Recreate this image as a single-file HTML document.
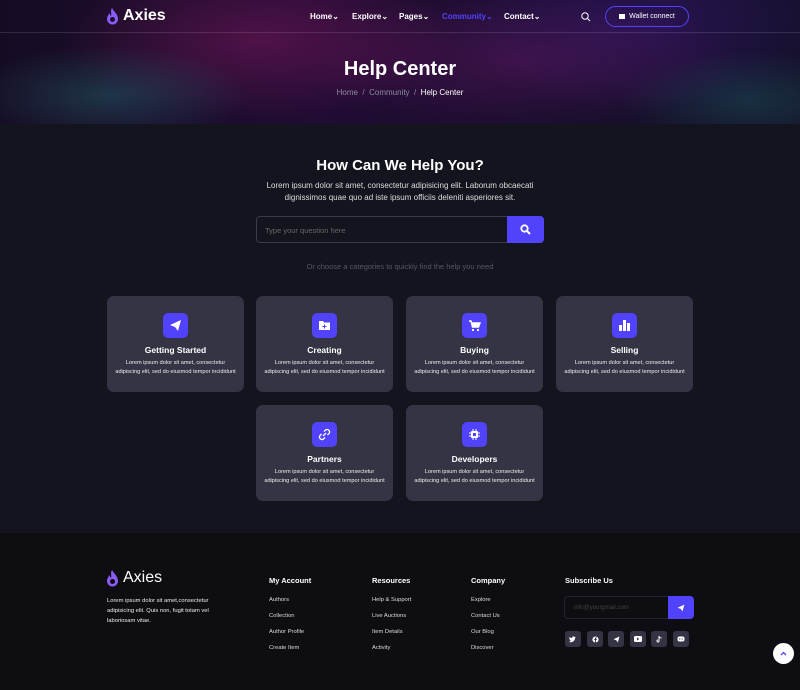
<!DOCTYPE html>
<html><head><meta charset="utf-8"><style>
*{margin:0;padding:0;box-sizing:border-box}
body{width:800px;height:690px;overflow:hidden;background:#14141f;font-family:"Liberation Sans",sans-serif;color:#fff;position:relative}
.hero{position:absolute;left:0;top:0;width:800px;height:124px;background:
radial-gradient(ellipse 140px 50px at 110px 95px,rgba(40,130,130,.35),transparent),
radial-gradient(ellipse 200px 80px at 260px 40px,rgba(140,25,100,.45),transparent),
radial-gradient(ellipse 220px 70px at 520px 60px,rgba(110,25,110,.4),transparent),
radial-gradient(ellipse 130px 50px at 750px 100px,rgba(30,120,120,.3),transparent),
radial-gradient(ellipse 200px 90px at 640px 20px,rgba(60,25,130,.45),transparent),
linear-gradient(90deg,#150c24,#210c33 40%,#180e2c 70%,#15102a);}
.nav{position:absolute;top:0;left:0;width:800px;height:33px;border-bottom:1px solid rgba(255,255,255,.12)}
.logo{position:absolute;display:flex;align-items:center;gap:4px;font-size:16px;font-weight:bold}
.menu{position:absolute;top:12px;font-size:8px;font-weight:bold}
.wallet{position:absolute;left:605px;top:6px;width:84px;height:21px;border:1.5px solid #5142fc;border-radius:11px;font-size:7px;display:flex;align-items:center;justify-content:center;gap:4px}
h1{position:absolute;top:58px;width:800px;text-align:center;font-size:20px}
.crumb{position:absolute;top:88px;width:800px;text-align:center;font-size:8px;color:#8a8aa0}
h2{position:absolute;top:157px;width:800px;text-align:center;font-size:15px}
.intro{position:absolute;top:180px;width:800px;text-align:center;font-size:8px;line-height:12px;color:#ddd}
.search{position:absolute;left:256px;top:216px;width:288px;height:27px;border:1px solid #3a3a4c;border-radius:4px;font-size:7.5px;color:#666;padding:9px 8px}
.sbtn{position:absolute;left:507px;top:216px;width:37px;height:27px;background:#5142fc;border-radius:0 4px 4px 0;display:flex;align-items:center;justify-content:center}
.or{position:absolute;top:262px;width:800px;text-align:center;font-size:7.5px;color:#55556a}
.card{position:absolute;width:137px;height:96px;background:#343444;border-radius:7px;text-align:center}
.ic{width:25px;height:25px;background:#5142fc;border-radius:5px;margin:17px auto 0;display:flex;align-items:center;justify-content:center}
.card h3{font-size:8.5px;margin-top:7px}
.card p{font-size:5.6px;line-height:9px;margin-top:4px;color:#eee}
.footer{position:absolute;left:0;top:533px;width:800px;height:157px;background:#0d0d12}
.fh{position:absolute;top:576px;font-size:7.5px;font-weight:bold}
.fl{position:absolute;font-size:5.8px;color:#ddd;line-height:16px}
.soc{position:absolute;top:631px;width:16px;height:16px;background:#343444;border-radius:3px;display:flex;align-items:center;justify-content:center}
</style></head><body>
<div class="hero"></div>
<div class="nav"></div>
<div class="logo" style="left:106px;top:7px"><svg width="13" height="18" viewBox="0 0 13 18"><path d="M6 1C8 5 12 7 12 12a5.5 5.5 0 0 1-11 0c0-3 2-4 2-6 1 1 1 2 2 3C6 7 4 4 6 1z" fill="#8a5cf6"/><circle cx="6.5" cy="12.5" r="2.5" fill="#1a0f2e"/></svg>Axies</div>
<div class="menu" style="left:310px">Home&#8964;</div>
<div class="menu" style="left:352px">Explore&#8964;</div>
<div class="menu" style="left:399px">Pages&#8964;</div>
<div class="menu" style="left:442px;color:#5142fc">Community&#8964;</div>
<div class="menu" style="left:504px">Contact&#8964;</div>
<svg style="position:absolute;left:581px;top:12px" width="10" height="10" viewBox="0 0 10 10"><circle cx="4" cy="4" r="3.2" stroke="#fff" fill="none"/><path d="M6.5 6.5L9 9" stroke="#fff"/></svg>
<div class="wallet"><span style="display:inline-block;width:6px;height:5px;background:#fff"></span>Wallet connect</div>
<h1>Help Center</h1>
<div class="crumb">Home &nbsp;/&nbsp; Community &nbsp;/&nbsp; <span style="color:#fff">Help Center</span></div>
<h2>How Can We Help You?</h2>
<div class="intro">Lorem ipsum dolor sit amet, consectetur adipisicing elit. Laborum obcaecati<br>dignissimos quae quo ad iste ipsum officiis deleniti asperiores sit.</div>
<div class="search">Type your question here</div>
<div class="sbtn"><svg width="11" height="11" viewBox="0 0 11 11"><circle cx="4.5" cy="4.5" r="3.2" stroke="#fff" stroke-width="1.8" fill="none"/><path d="M7 7L10 10" stroke="#fff" stroke-width="2"/></svg></div>
<div class="or">Or choose a categories to quickly find the help you need</div>

<div class="card" style="left:107px;top:296px"><div class="ic"><svg width="13" height="13" viewBox="0 0 13 13"><path d="M1 6L12 1 9 12 6 8z" fill="#fff"/></svg></div><h3>Getting Started</h3><p>Lorem ipsum dolor sit amet, consectetur<br>adipiscing elit, sed do eiusmod tempor incididunt</p></div>
<div class="card" style="left:256px;top:296px"><div class="ic"><svg width="13" height="11" viewBox="0 0 13 11"><path d="M1 1h4l1 1.5h6V10H1z" fill="#fff"/><path d="M6.5 4.5v4M4.5 6.5h4" stroke="#5142fc"/></svg></div><h3>Creating</h3><p>Lorem ipsum dolor sit amet, consectetur<br>adipiscing elit, sed do eiusmod tempor incididunt</p></div>
<div class="card" style="left:406px;top:296px"><div class="ic"><svg width="13" height="13" viewBox="0 0 13 13"><path d="M1 2h2l1.5 6h6L12 4H4" stroke="#fff" stroke-width="1.4" fill="#fff"/><circle cx="5" cy="11" r="1.1" fill="#fff"/><circle cx="10" cy="11" r="1.1" fill="#fff"/></svg></div><h3>Buying</h3><p>Lorem ipsum dolor sit amet, consectetur<br>adipiscing elit, sed do eiusmod tempor incididunt</p></div>
<div class="card" style="left:556px;top:296px"><div class="ic"><svg width="13" height="13" viewBox="0 0 13 13"><rect x="1" y="6" width="3" height="6" fill="#fff"/><rect x="5" y="1" width="3" height="11" fill="#fff"/><rect x="9" y="4" width="3" height="8" fill="#fff"/></svg></div><h3>Selling</h3><p>Lorem ipsum dolor sit amet, consectetur<br>adipiscing elit, sed do eiusmod tempor incididunt</p></div>
<div class="card" style="left:256px;top:405px"><div class="ic"><svg width="13" height="13" viewBox="0 0 13 13"><path d="M5 8l3-3M6 3.5l1.5-1.5a2.5 2.5 0 0 1 3.5 3.5L9.5 7M7 9.5L5.5 11A2.5 2.5 0 0 1 2 7.5L3.5 6" stroke="#fff" stroke-width="1.3" fill="none"/></svg></div><h3>Partners</h3><p>Lorem ipsum dolor sit amet, consectetur<br>adipiscing elit, sed do eiusmod tempor incididunt</p></div>
<div class="card" style="left:406px;top:405px"><div class="ic"><svg width="13" height="13" viewBox="0 0 13 13"><rect x="3" y="3" width="7" height="7" rx="1" fill="#fff"/><path d="M5 1v2M8 1v2M5 10v2M8 10v2M1 5h2M1 8h2M10 5h2M10 8h2" stroke="#fff"/><rect x="5" y="5" width="3" height="3" fill="#5142fc"/></svg></div><h3>Developers</h3><p>Lorem ipsum dolor sit amet, consectetur<br>adipiscing elit, sed do eiusmod tempor incididunt</p></div>

<div class="footer"></div>
<div class="logo" style="left:106px;top:569px"><svg width="13" height="18" viewBox="0 0 13 18"><path d="M6 1C8 5 12 7 12 12a5.5 5.5 0 0 1-11 0c0-3 2-4 2-6 1 1 1 2 2 3C6 7 4 4 6 1z" fill="#8a5cf6"/><circle cx="6.5" cy="12.5" r="2.5" fill="#0d0d12"/></svg><span style="font-weight:normal">Axies</span></div>
<div class="fl" style="left:107px;top:596px;line-height:10px;color:#eee">Lorem ipsum dolor sit amet,consectetur<br>adipisicing elit. Quis non, fugit totam vel<br>laboriosam vitae.</div>
<div class="fh" style="left:269px">My Account</div>
<div class="fh" style="left:372px">Resources</div>
<div class="fh" style="left:471px">Company</div>
<div class="fh" style="left:565px">Subscribe Us</div>
<div class="fl" style="left:269px;top:592px">Authors<br>Collection<br>Author Profile<br>Create Item</div>
<div class="fl" style="left:372px;top:592px">Help &amp; Support<br>Live Auctions<br>Item Details<br>Activity</div>
<div class="fl" style="left:471px;top:592px">Explore<br>Contact Us<br>Our Blog<br>Discover</div>
<div style="position:absolute;left:564px;top:596px;width:105px;height:23px;border:1px solid #222230;border-radius:4px 0 0 4px;font-size:6px;color:#444;padding:8px 9px">info@yourgmail.com</div>
<div style="position:absolute;left:668px;top:596px;width:26px;height:23px;background:#5142fc;border-radius:0 4px 4px 0;display:flex;align-items:center;justify-content:center"><svg width="8" height="8" viewBox="0 0 13 13"><path d="M1 6L12 1 9 12 6 8z" fill="#fff"/></svg></div>
<div class="soc" style="left:565px"><svg width="8" height="7" viewBox="0 0 8 7"><path d="M0 6c3 1 6-1 6-4l1-1-1 .3C5 0 3 .5 3 2 2 2 1 1.5 .5 1 0 2 .5 3 1 3.3H.5C.6 4 1 4.5 2 4.7 1.5 5 1 5.5 0 6z" fill="#fff"/></svg></div>
<div class="soc" style="left:587px"><svg width="7" height="7" viewBox="0 0 8 8"><circle cx="4" cy="4" r="3.5" fill="#fff"/><path d="M4.5 8V4.5h1V3.5h-1V3c0-.4.2-.5.6-.5h.4V1.6H4.8C3.9 1.6 3.5 2 3.5 3v.5h-1v1h1V8" fill="#343444"/></svg></div>
<div class="soc" style="left:608px"><svg width="7" height="7" viewBox="0 0 13 13"><path d="M1 6L12 1 9 12 6 8z" fill="#fff"/></svg></div>
<div class="soc" style="left:630px"><svg width="8" height="6" viewBox="0 0 8 6"><rect width="8" height="6" rx="1.5" fill="#fff"/><path d="M3 1.5v3L5.3 3z" fill="#343444"/></svg></div>
<div class="soc" style="left:651px"><svg width="6" height="7" viewBox="0 0 6 7"><path d="M3 0v5a1 1 0 1 1-1-1M3 0c0 1 1 2 2.5 2" stroke="#fff" fill="none" stroke-width="1"/></svg></div>
<div class="soc" style="left:673px"><svg width="8" height="6" viewBox="0 0 8 6"><rect x="0.5" y="0.5" width="7" height="5" rx="2" fill="#fff"/><circle cx="2.8" cy="3" r=".6" fill="#343444"/><circle cx="5.2" cy="3" r=".6" fill="#343444"/></svg></div>
<div style="position:absolute;left:773px;top:643px;width:21px;height:21px;background:#fff;border-radius:50%;display:flex;align-items:center;justify-content:center"><svg width="7" height="5" viewBox="0 0 7 5"><path d="M1 4L3.5 1.5 6 4" stroke="#5142fc" stroke-width="1.3" fill="none"/></svg></div>
</body></html>
